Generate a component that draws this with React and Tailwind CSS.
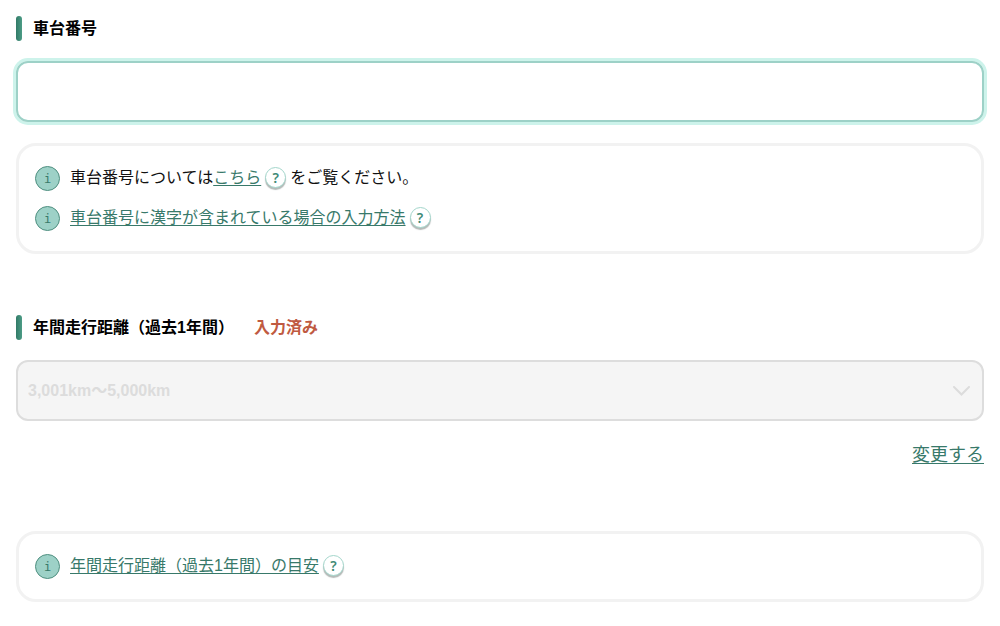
import React, { useState } from "react";

function SectionHeading({ htmlFor, title, status }) {
  return (
    <div className="flex items-center text-base leading-6 font-bold">
      <span className="w-1.5 h-[25px] mr-[11px] rounded-full bg-linear-to-r from-[#317a67] to-[#4c9c86]" />
      <label htmlFor={htmlFor} className="text-black">
        {title}
      </label>
      {status && <span className="ml-5 text-[#c05a41]">{status}</span>}
    </div>
  );
}

function HelpButton({ label }) {
  return (
    <button
      type="button"
      aria-label={label}
      className="flex items-center justify-center shrink-0 size-[21px] mx-1 rounded-full border border-[#a3d6cb] bg-white font-['Noto_Sans',sans-serif] text-sm leading-none font-semibold text-[#3f8a76] shadow-[0_2px_1px_#b4bab8]"
    >
      ?
    </button>
  );
}

function InfoRow({ children }) {
  return (
    <li className="flex items-center gap-2.5">
      <span className="flex items-center justify-center shrink-0 size-[25px] rounded-full border border-[#4f8f80] bg-[#9dd1c7] font-['DejaVu_Sans_Mono',monospace] text-xs leading-none text-[#387a6a]">
        i
      </span>
      <div className="flex items-center pb-0.5 leading-[23px]">{children}</div>
    </li>
  );
}

function InfoBox({ children }) {
  return (
    <ul className="flex flex-col gap-[15px] px-4 py-5 rounded-[20px] border-3 border-[#f2f2f2] text-base">
      {children}
    </ul>
  );
}

const linkStyle =
  "text-[#38796a] underline underline-offset-2 decoration-1 [text-decoration-skip-ink:none]";

export default function App() {
  const [chassisNumber, setChassisNumber] = useState("");

  return (
    <main className="px-4 py-4 bg-white text-[#111] font-['Liberation_Sans','Noto_Sans_CJK_JP',sans-serif]">
      <section>
        <SectionHeading htmlFor="chassis-number" title="車台番号" />
        <input
          id="chassis-number"
          type="text"
          value={chassisNumber}
          onChange={(e) => setChassisNumber(e.target.value)}
          className="block w-full h-[61px] mt-5 px-2.5 rounded-xl border-2 border-[#9dd1c7] outline-none ring-3 ring-[#cdf3eb]"
        />
        <div className="mt-[21px]">
          <InfoBox>
            <InfoRow>
              <span>車台番号については</span>
              <a href="#chassis" className={linkStyle}>
                こちら
              </a>
              <HelpButton label="車台番号について" />
              <span>をご覧ください。</span>
            </InfoRow>
            <InfoRow>
              <a href="#kanji" className={linkStyle}>
                車台番号に漢字が含まれている場合の入力方法
              </a>
              <HelpButton label="漢字の入力方法" />
            </InfoRow>
          </InfoBox>
        </div>
      </section>

      <section className="mt-[61px]">
        <SectionHeading
          htmlFor="mileage"
          title="年間走行距離（過去1年間）"
          status="入力済み"
        />
        <div className="grid items-center mt-5">
          <select
            id="mileage"
            disabled
            className="col-start-1 row-start-1 appearance-none w-full h-[61px] px-2.5 rounded-xl border-2 border-[#dddddd] bg-[#f5f5f5] text-base font-bold text-[#dcdcdc] opacity-100"
          >
            <option>3,001km〜5,000km</option>
          </select>
          <svg
            className="col-start-1 row-start-1 justify-self-end mr-3.5 w-[17px] h-2.5 text-[#dcdcdc] pointer-events-none"
            viewBox="0 0 17 10"
            fill="none"
            stroke="currentColor"
            strokeWidth="2"
            strokeLinecap="round"
          >
            <path d="M1 1l7.5 7.5L16 1" />
          </svg>
        </div>
        <div className="flex justify-end mt-5">
          <a href="#change" className={`${linkStyle} text-lg leading-7`}>
            変更する
          </a>
        </div>
        <div className="mt-[62px]">
          <InfoBox>
            <InfoRow>
              <a href="#guide" className={linkStyle}>
                年間走行距離（過去1年間）の目安
              </a>
              <HelpButton label="年間走行距離の目安" />
            </InfoRow>
          </InfoBox>
        </div>
      </section>
    </main>
  );
}
